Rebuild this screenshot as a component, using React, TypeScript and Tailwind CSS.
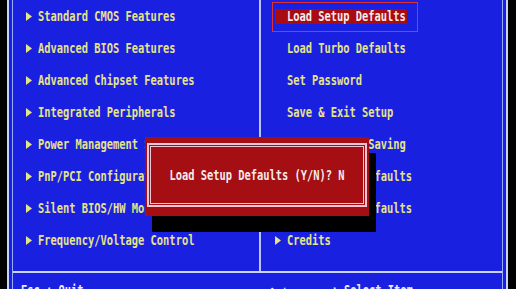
import React from "react";

const Txt = ({ children, className = "" }: { children: React.ReactNode; className?: string }) => (
  <span className={`inline-block scale-y-[1.32] whitespace-pre font-['DejaVu_Sans_Mono',monospace] font-bold text-[10.4px] leading-[16px] ${className}`}>
    {children}
  </span>
);

const Arrow = () => (
  <svg width="6" height="9" viewBox="0 0 6 9" className="shrink-0">
    <polygon points="0,0 6,4.5 0,9" fill="#e6e48c" />
  </svg>
);

const leftItems = [
  "Standard CMOS Features",
  "Advanced BIOS Features",
  "Advanced Chipset Features",
  "Integrated Peripherals",
  "Power Management Setup",
  "PnP/PCI Configurations",
  "Silent BIOS/HW Monitor",
  "Frequency/Voltage Control",
];

const rightItems = [
  "Load Turbo Defaults",
  "Set Password",
  "Save & Exit Setup",
  "Exit Without Saving",
  "Save Custom Defaults",
  "Load Custom Defaults",
];

export default function App() {
  return (
    <div className="relative w-[516px] h-[289px] overflow-hidden bg-black">
      <div className="ml-[7px] w-[501px] h-full bg-[#1a20e0] border-x-2 border-[#c8d4ff] px-[3px]">
        <div className="h-full border-x border-[#9aacff] flex flex-col">
          <div className="h-[271px] shrink-0 flex">
            <div className="w-[246px] flex flex-col">
              {leftItems.map((t) => (
                <div key={t} className="h-8 flex items-center pl-[13px] gap-[6px] text-[#e6e48c]">
                  <Arrow />
                  <Txt>{t}</Txt>
                </div>
              ))}
            </div>
            <div className="w-[2px] bg-[#b8c6ff]" />
            <div className="flex-1 flex flex-col">
              <div className="relative h-8 flex items-center pl-[14px]">
                <span className="absolute left-[11px] top-[2px] w-[146px] h-[30px] border border-[#e03030]" />
                <div className="w-[132px] h-[15px] bg-[#a80c12] flex items-center pl-[12px] text-[#f6ecec]">
                  <Txt>Load Setup Defaults</Txt>
                </div>
              </div>
              {rightItems.map((t) => (
                <div key={t} className="h-8 flex items-center pl-[26px] text-[#e6e48c]">
                  <Txt>{t}</Txt>
                </div>
              ))}
              <div className="h-8 flex items-center pl-[14px] gap-[6px] text-[#e6e48c]">
                <Arrow />
                <Txt>Credits</Txt>
              </div>
            </div>
          </div>
          <div className="h-[2px] shrink-0 bg-[#c8d4ff]" />
          <div className="flex shrink-0 pt-[3px] text-[#ecebf4]">
            <div className="w-[246px] pl-2">
              <Txt>Esc : Quit</Txt>
            </div>
            <div className="pl-[10px]">
              <Txt>↑ ↓ → ←   : Select Item</Txt>
            </div>
          </div>
        </div>
      </div>

      <div className="absolute left-[145px] top-[137px] w-[224px] h-[79px] bg-[#a50e12] shadow-[7px_16px_0_0_#000] pt-[6px] pb-[9px] px-[2px]">
        <div className="h-full border-2 border-[#efc6d6] p-[1px]">
          <div className="h-full border border-[#efc6d6] flex items-center justify-center text-[#f6ecec]">
            <Txt>Load Setup Defaults (Y/N)? N</Txt>
          </div>
        </div>
      </div>
    </div>
  );
}
